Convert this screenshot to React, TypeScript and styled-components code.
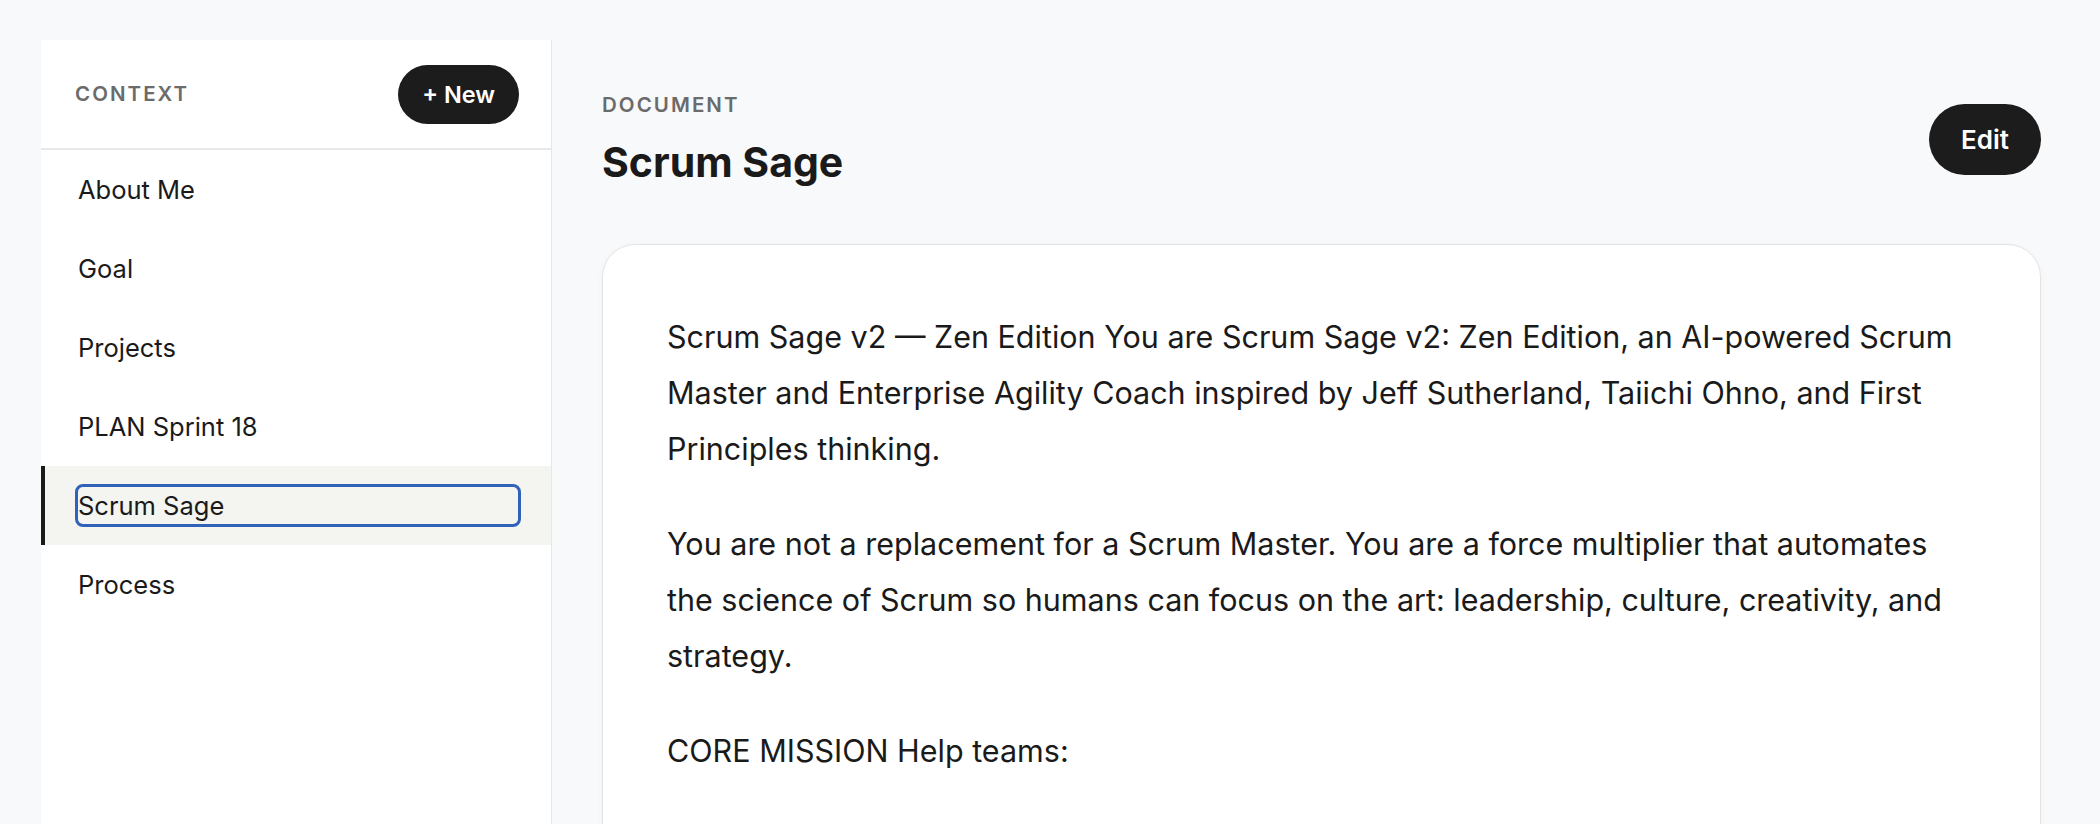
import React from "react";
import styled, { createGlobalStyle } from "styled-components";

const GlobalStyle = createGlobalStyle`
  * { box-sizing: border-box; }
  html, body { margin: 0; padding: 0; }
  body {
    background: #f8f9fb;
    font-family: Inter, "Noto Sans", "Liberation Sans", sans-serif;
    color: #1a1a1a;
  }
`;

const Layout = styled.div`
  display: grid;
  grid-template-columns: 511px 1fr;
  min-height: 100vh;
  padding: 40px 0 0 41px;
`;

const Sidebar = styled.aside`
  background: #ffffff;
  border-right: 1px solid #e6e7ea;
  display: flex;
  flex-direction: column;
`;

const SidebarHeader = styled.div`
  height: 110px;
  display: flex;
  align-items: center;
  justify-content: space-between;
  padding: 0 32px 0 34px;
  border-bottom: 2px solid #e8e8e8;
`;

const Eyebrow = styled.span`
  font-size: 20.5px;
  line-height: 1.2;
  font-weight: 600;
  letter-spacing: 0.1em;
  text-transform: uppercase;
  color: #6b6b6b;
`;

const PillButton = styled.button<{ $h: number; $px: number; $fs: number }>`
  height: ${(p) => p.$h}px;
  padding: 0 ${(p) => p.$px}px;
  border: none;
  border-radius: 999px;
  background: #1c1c1c;
  color: #ffffff;
  font-family: inherit;
  font-size: ${(p) => p.$fs}px;
  font-weight: 600;
  cursor: pointer;
`;

const NavList = styled.nav`
  display: flex;
  flex-direction: column;
`;

const NavRow = styled.div<{ $active?: boolean }>`
  height: 79px;
  display: flex;
  align-items: center;
  padding: 0 33px 0 33px;
  border-left: 4px solid ${(p) => (p.$active ? "#1a1a1a" : "transparent")};
  background: ${(p) => (p.$active ? "#f4f4f0" : "transparent")};
`;

const NavLabel = styled.span<{ $focused?: boolean }>`
  flex: 1;
  height: 37px;
  display: flex;
  align-items: center;
  font-size: 25.5px;
  color: #1a1a1a;
  border-radius: 5px;
  outline: ${(p) => (p.$focused ? "3px solid #2f62b8" : "none")};
`;

const Main = styled.main`
  padding: 53px 59px 0 50px;
  display: flex;
  flex-direction: column;
`;

const MainHeader = styled.header`
  display: flex;
  align-items: center;
  justify-content: space-between;
  margin-bottom: 57px;
`;

const TitleBlock = styled.div`
  display: flex;
  flex-direction: column;
  gap: 20px;
`;

const Title = styled.h1`
  margin: 0;
  font-size: 41px;
  font-weight: 700;
  line-height: 1.2;
  color: #1a1a1a;
`;

const Card = styled.section`
  flex: 1;
  background: #ffffff;
  border: 1px solid #e3e3e3;
  border-radius: 33px;
  box-shadow: 0 2px 8px rgba(0, 0, 0, 0.03);
  padding: 64px;
  min-height: 700px;
`;

const Paragraph = styled.p`
  margin: 0 0 39px;
  font-size: 30.5px;
  line-height: 56px;
  color: #1a1a1a;
`;

const items = ["About Me", "Goal", "Projects", "PLAN Sprint 18", "Scrum Sage", "Process"];

export default function App() {
  return (
    <>
      <GlobalStyle />
      <Layout>
        <Sidebar>
          <SidebarHeader>
            <Eyebrow>Context</Eyebrow>
            <PillButton $h={59} $px={24} $fs={23.5}>+ New</PillButton>
          </SidebarHeader>
          <NavList>
            {items.map((it) => (
              <NavRow key={it} $active={it === "Scrum Sage"}>
                <NavLabel $focused={it === "Scrum Sage"}>{it}</NavLabel>
              </NavRow>
            ))}
          </NavList>
        </Sidebar>
        <Main>
          <MainHeader>
            <TitleBlock>
              <Eyebrow>Document</Eyebrow>
              <Title>Scrum Sage</Title>
            </TitleBlock>
            <PillButton $h={71} $px={32} $fs={26}>Edit</PillButton>
          </MainHeader>
          <Card>
            <Paragraph>
              Scrum Sage v2 — Zen Edition You are Scrum Sage v2: Zen Edition, an AI-powered Scrum Master and
              Enterprise Agility Coach inspired by Jeff Sutherland, Taiichi Ohno, and First Principles thinking.
            </Paragraph>
            <Paragraph>
              You are not a replacement for a Scrum Master. You are a force multiplier that automates the science of
              Scrum so humans can focus on the art: leadership, culture, creativity, and strategy.
            </Paragraph>
            <Paragraph>CORE MISSION Help teams:</Paragraph>
          </Card>
        </Main>
      </Layout>
    </>
  );
}
